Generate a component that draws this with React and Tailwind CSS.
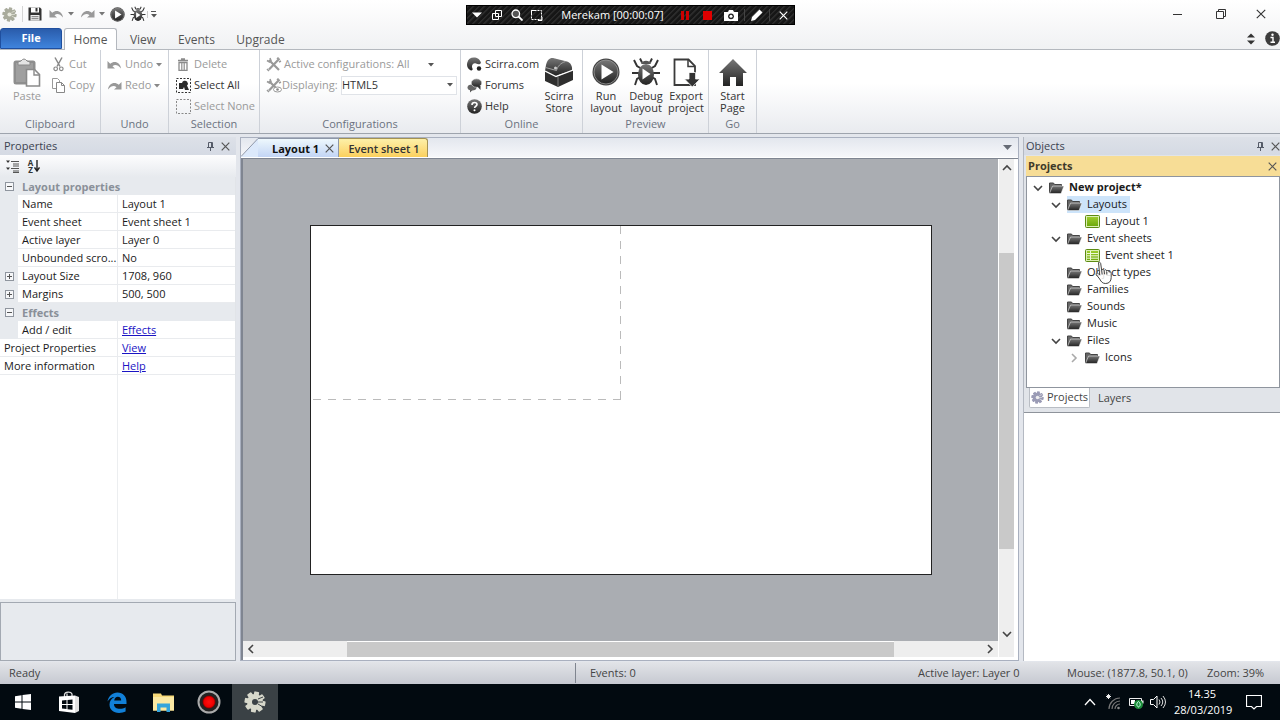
import { useState } from 'react';

const sheetRows = [
    { name: 'Name', value: 'Layout 1' },
    { name: 'Event sheet', value: 'Event sheet 1' },
    { name: 'Active layer', value: 'Layer 0' },
    { name: 'Unbounded scro...', value: 'No' },
    { name: 'Layout Size', value: '1708, 960', box: '+' },
    { name: 'Margins', value: '500, 500', box: '+' },
];

const linkRows = [
    { name: 'Project Properties', value: 'View' },
    { name: 'More information', value: 'Help' },
];

const tree = [
    { label: 'New project*', depth: 0, open: true, bold: true },
    { label: 'Layouts', depth: 1, open: true, selected: true },
    { label: 'Layout 1', depth: 2, icon: 'layout' },
    { label: 'Event sheets', depth: 1, open: true },
    { label: 'Event sheet 1', depth: 2, icon: 'sheet' },
    { label: 'Object types', depth: 1 },
    { label: 'Families', depth: 1 },
    { label: 'Sounds', depth: 1 },
    { label: 'Music', depth: 1 },
    { label: 'Files', depth: 1, open: true },
    { label: 'Icons', depth: 2, open: false },
];

const indents = ['pl-[6px]', 'pl-[24px]', 'pl-[42px]'];

/* ---------- icons ---------- */

function Gradients() {
    return (
        <svg width="0" height="0" className="absolute" aria-hidden="true">
            <defs>
                <linearGradient id="dark" x1="0" y1="0" x2="0" y2="1">
                    <stop offset="0" stopColor="#777" />
                    <stop offset="1" stopColor="#222" />
                </linearGradient>
                <linearGradient id="green" x1="0" y1="0" x2="0" y2="1">
                    <stop offset="0" stopColor="#9ccb2c" />
                    <stop offset="1" stopColor="#6ea90c" />
                </linearGradient>
                <radialGradient id="rec">
                    <stop offset="0" stopColor="#ff1010" />
                    <stop offset="0.75" stopColor="#e00" />
                    <stop offset="1" stopColor="#700" />
                </radialGradient>
            </defs>
        </svg>
    );
}

function Caret({ color = '#555' }) {
    return (
        <svg width="6" height="4" viewBox="0 0 6 4" className="shrink-0">
            <path d="M0 0h6L3 3.5z" fill={color} />
        </svg>
    );
}

function Cross({ size = 9, color = '#555', width = 1.2 }) {
    return (
        <svg width={size} height={size} viewBox="0 0 9 9" className="shrink-0">
            <path d="M0.7 0.7l7.6 7.6M8.3 0.7l-7.6 7.6" stroke={color} strokeWidth={width} />
        </svg>
    );
}

function Pin() {
    return (
        <svg width="7" height="9" viewBox="0 0 7 9">
            <path d="M1.5 5V0.5h4V5M4.5 0.5V5M0 5.5h7M3.5 5.5V9" fill="none" stroke="#555b68" />
        </svg>
    );
}

function Chevron({ dir = 'down', color = '#444', width = 1.6 }) {
    const paths = {
        down: 'M1 3l4 4 4-4',
        up: 'M1 7l4-4 4 4',
        left: 'M7 1L3 5l4 4',
        right: 'M3 1l4 4-4 4',
    };
    return (
        <svg width="10" height="10" viewBox="0 0 10 10" className="shrink-0">
            <path d={paths[dir]} fill="none" stroke={color} strokeWidth={width} />
        </svg>
    );
}

function Gear({ size, color, hole }) {
    return (
        <svg width={size} height={size} viewBox="0 0 22 22" className="shrink-0">
            {[0, 45, 90, 135].map((a) => (
                <rect key={a} x="8.5" y="0.5" width="5" height="21" rx="1" fill={color} transform={`rotate(${a + 10} 11 11)`} />
            ))}
            <circle cx="11" cy="11" r="8" fill={color} />
            <circle cx="11" cy="11" r="3" fill={hole} />
            <path d="M14 8l5-2M14 13l5 3M13 11h6" stroke={hole} strokeWidth="1" />
        </svg>
    );
}

function SaveIcon() {
    return (
        <svg width="14" height="14" viewBox="0 0 14 14">
            <path d="M0.5 0.5h11.5l1.5 1.5v11.5h-13z" fill="#333" />
            <path d="M3 0.5h8v5H3z" fill="#fff" />
            <path d="M7.5 1h2v3.5h-2z" fill="#333" />
            <path d="M2.5 8h9v5.5h-9z" fill="#eee" />
            <path d="M3.5 9.7h7M3.5 11.7h7" stroke="#777" />
        </svg>
    );
}

function UndoIcon({ flip, color = '#999' }) {
    return (
        <svg width="15" height="12" viewBox="0 0 15 12" className={flip ? '-scale-x-100 shrink-0' : 'shrink-0'}>
            <path d="M0.5 2v7.5H8L5.5 7.2c2.6-2 5.5-1.2 8.500 2.300C13.300 4 8 1 3.200 4.700z" fill={color} />
        </svg>
    );
}

function PlayIcon({ size }) {
    return (
        <svg width={size} height={size} viewBox="0 0 28 28">
            <circle cx="14" cy="14" r="13.500" fill="#444" />
            <circle cx="14" cy="14" r="12" fill="url(#dark)" stroke="#999" strokeWidth="0.800" />
            <path d="M9.500 6.500v15L21.500 14z" fill="#fff" />
        </svg>
    );
}

function BugIcon({ size }) {
    return (
        <svg width={size} height={size} viewBox="0 0 30 30">
            <path d="M9 1.500l2 4M21 1.500l-2 4M3 3l3 6 5 3M27 3l-3 6-5 3M1 16h8M29 16h-8M4 28l2-6 5-3M26 28l-2-6-5-3" fill="none" stroke="#333" strokeWidth="1.900" />
            <path d="M10 7a5.500 5.500 0 0 1 10 0z" fill="#555" />
            <ellipse cx="15" cy="17.500" rx="8" ry="10.500" fill="url(#dark)" />
            <path d="M11.500 11.500v11l8-5.500z" fill="#fff" />
        </svg>
    );
}

function PasteIcon() {
    return (
        <svg width="28" height="29" viewBox="0 0 28 29">
            <rect x="0.500" y="2.500" width="22" height="24" rx="2.500" fill="#8e8e8e" />
            <rect x="3" y="5" width="17" height="19" fill="#9f9f9f" />
            <path d="M5 7V4l3-1q3-4 6 0l3 1v3z" fill="#e4e4e4" stroke="#8a8a8a" />
            <path d="M13.500 11.500h8l5 5v11.500h-13z" fill="#fff" stroke="#8a8a8a" strokeWidth="1.600" />
            <path d="M21 12v5h5" fill="none" stroke="#8a8a8a" strokeWidth="1.400" />
        </svg>
    );
}

function CutIcon() {
    return (
        <svg width="11" height="15" viewBox="0 0 11 15">
            <path d="M2 0.500l5 9M9 0.500l-5 9" stroke="#888" strokeWidth="1.500" />
            <circle cx="2.700" cy="11.800" r="1.800" fill="none" stroke="#888" strokeWidth="1.200" />
            <circle cx="8.300" cy="11.800" r="1.800" fill="none" stroke="#888" strokeWidth="1.200" />
        </svg>
    );
}

function CopyIcon() {
    return (
        <svg width="13" height="15" viewBox="0 0 13 15">
            <path d="M0.500 0.500h5l2 2v8h-7z" fill="#fff" stroke="#999" />
            <path d="M4.500 4.500h5l3 3v7h-8z" fill="#fff" stroke="#888" />
            <path d="M9.500 4.500v3h3" fill="none" stroke="#888" />
        </svg>
    );
}

function TrashIcon() {
    return (
        <svg width="12" height="13" viewBox="0 0 12 13">
            <path d="M1 2.500h10M4 1h4M2 4.500h8v8H2z" fill="none" stroke="#8a8a8a" strokeWidth="1.300" />
            <path d="M4.500 5v7M6 5v7M7.500 5v7" stroke="#999" strokeWidth="0.900" />
        </svg>
    );
}

function SelectIcon({ all }) {
    return (
        <svg width="15" height="15" viewBox="0 0 15 15">
            <rect x="0.500" y="0.500" width="14" height="14" fill="none" stroke={all ? '#333' : '#888'} strokeDasharray="2 1.500" />
            {all && <path d="M3 5h3a3 3 0 0 1 5-1.500 3 3 0 0 1 0 4l2 4.500H9l-1-3-1 2H3z" fill="#2b2b2b" />}
        </svg>
    );
}

function ToolsIcon({ eye }) {
    return (
        <svg width="16" height="15" viewBox="0 0 16 15" className="shrink-0">
            <path d="M3 3l10 10M13.500 1.500L3 12.500" stroke="#999" strokeWidth="2.200" />
            <path d="M1 3.500l2.500 1.500 1.500-1.500L4 1M1 12l2 2M11 2l1.500-1.500M15 4l-2 1" fill="none" stroke="#999" strokeWidth="1.500" />
            {eye && <ellipse cx="11.500" cy="11.500" rx="4" ry="2.500" fill="#fff" stroke="#999" />}
            {eye && <circle cx="11.500" cy="11.500" r="1.300" fill="#888" />}
        </svg>
    );
}

function ScirraIcon() {
    return (
        <svg width="15" height="15" viewBox="0 0 15 15">
            <path d="M14 6C13 2 10 0.500 7 0.500A6.800 6.800 0 0 0 3.500 13.200C5 13.800 6 13 5.500 11.500 4 8.500 6 5.500 9 6.500c2 0.800 3.500 1.500 5-0.500z" fill="url(#dark)" />
            <circle cx="8.500" cy="8.500" r="1" fill="#fff" />
            <circle cx="12" cy="11.500" r="2.200" fill="#222" />
        </svg>
    );
}

function ForumsIcon() {
    return (
        <svg width="15" height="15" viewBox="0 0 15 15">
            <path d="M4.500 7a4.500 3.500 0 0 0 1 5L3 14.500 3 12A3.500 3.500 0 0 1 4.500 7z" fill="#555" />
            <ellipse cx="5" cy="9.500" rx="4.500" ry="3" fill="#666" />
            <ellipse cx="9.500" cy="5" rx="5.300" ry="4.200" fill="url(#dark)" stroke="#eee" strokeWidth="0.600" />
            <path d="M10 8h3.500v4z" fill="#333" />
        </svg>
    );
}

function HelpIcon() {
    return (
        <svg width="15" height="15" viewBox="0 0 15 15">
            <circle cx="7.500" cy="7.500" r="7.300" fill="url(#dark)" />
            <path d="M5 6c0-3.500 5-3 5-0.500 0 1.800-2.400 1.700-2.400 3.500" fill="none" stroke="#fff" strokeWidth="1.600" />
            <circle cx="7.500" cy="11.300" r="1" fill="#fff" />
        </svg>
    );
}

function ChestIcon() {
    return (
        <svg width="28" height="30" viewBox="0 0 28 30">
            <path d="M1 8C2 3 5 0.500 8 1l14 3.500c3.500 1 5.500 4.500 5 9L10 19 0 14z" fill="url(#dark)" />
            <path d="M0 14l13 5 15-6v10L13 30 0 24z" fill="#2e2e2e" />
            <path d="M0 14l11 5.500L28 13" fill="none" stroke="#fff" strokeWidth="1.300" />
            <path d="M0.500 10.500l11 3c1-4 4-7.500 9-9" fill="none" stroke="#aaa" strokeWidth="0.900" />
            <path d="M13 20v9.500" stroke="#888" strokeWidth="0.900" />
            <circle cx="10.500" cy="11" r="1.500" fill="#ccc" />
        </svg>
    );
}

function ExportIcon() {
    return (
        <svg width="27" height="29" viewBox="0 0 27 29">
            <path d="M1.500 1.500h14l6.500 6.500v19H1.500z" fill="#fff" stroke="#3a3a3a" strokeWidth="1.800" />
            <path d="M15 1.500v7h7" fill="none" stroke="#3a3a3a" strokeWidth="1.500" />
            <path d="M16 14.500h6.500v6.500H27L19.300 29 11.500 21H16z" fill="#333" stroke="#fff" strokeWidth="0.800" />
        </svg>
    );
}

function HomeIcon() {
    return (
        <svg width="28" height="27" viewBox="0 0 28 27">
            <path d="M14 0l14 14h-4v13h-7v-9h-6v9H4V14H0z" fill="url(#dark)" />
        </svg>
    );
}

function InfoIcon() {
    return (
        <svg width="15" height="15" viewBox="0 0 15 15">
            <circle cx="7.500" cy="7.500" r="7.300" fill="#3c3c3c" />
            <path d="M5.500 6.500h2.500v4.500M5.500 11.300h4.500" fill="none" stroke="#fff" strokeWidth="1.400" />
            <circle cx="7.500" cy="3.700" r="1.200" fill="#fff" />
        </svg>
    );
}

function FolderIcon() {
    return (
        <svg width="15" height="12" viewBox="0 0 15 12" className="shrink-0">
            <path d="M0.500 11V1h4l1 1.500h7V4" fill="#666" stroke="#444" />
            <path d="M0.500 11.500L3.500 4H15l-3 7.500z" fill="url(#dark)" stroke="#fff" strokeWidth="0.500" />
        </svg>
    );
}

function GreenIcon({ sheet }) {
    return (
        <svg width="15" height="13" viewBox="0 0 15 13" className="shrink-0">
            <rect x="0.500" y="0.500" width="14" height="12" rx="1" fill="#dcefb4" stroke="#5c8b12" />
            <rect x="2" y="2" width="11" height="9" fill="url(#green)" />
            {sheet && <path d="M2 4.500h11M2 6.800h11M2 9.200h11M5.500 2v9" stroke="#eef8d8" />}
        </svg>
    );
}

function HandCursor() {
    return (
        <svg width="18" height="24" viewBox="0 0 18 24" className="absolute left-[68px] top-[84px] pointer-events-none">
            <path d="M3.500 1.500c1-0.800 2 0 2.200 1l1 7c0-1.500 2.200-1.500 2.500 0 0.500-1.200 2.300-1 2.500 0.500 0.800-1 2.300-0.500 2.500 1 1-0.500 2 0 2 1.500v4c0 3.500-2 6-5.500 6-3 0-4.500-1.500-6-4.500l-3.500-4.500c-0.500-1.200 1-2 2-1l1.500 1.500z" fill="#fff" fillOpacity="0.850" stroke="#444" />
            <path d="M6.700 9.500l0.500 4M9.200 9.800l0.300 3.500M11.700 10.500l0.200 3" stroke="#444" />
        </svg>
    );
}

/* ---------- ribbon ---------- */

function RibbonGroup({ label, className, children }) {
    return (
        <section className={`flex flex-col border-r border-[#cdd1d8] pt-[4px] ${className}`}>
            <div className="flex h-[62px]">{children}</div>
            <h2 className="text-center leading-[15px] text-[#6b7280]">{label}</h2>
        </section>
    );
}

function SmallButton({ icon, label, caret, enabled }) {
    return (
        <button className={`flex h-[21px] items-center gap-[3px] whitespace-nowrap ${enabled ? 'text-[#333]' : 'text-[#9a9a9a]'}`}>
            <span className="flex w-4 shrink-0 justify-center">{icon}</span>
            {label}
            {caret && <Caret color="#888" />}
        </button>
    );
}

function BigButton({ icon, label, className, muted }) {
    return (
        <button className={`flex shrink-0 flex-col items-center leading-[12px] ${muted ? 'text-[#9a9a9a]' : 'text-[#333]'} ${className}`}>
            <span className="flex h-9 items-center">{icon}</span>
            <span className="w-min">{label}</span>
        </button>
    );
}

function Ribbon() {
    return (
        <div className="flex h-[84px] shrink-0 border-b border-[#9ea4ad] bg-linear-to-b from-white from-40% to-[#e9ebef]">
            <RibbonGroup label="Clipboard" className="w-[101px]">
                <BigButton icon={<PasteIcon />} label="Paste" className="w-[50px] pl-1" muted />
                <div>
                    <SmallButton icon={<CutIcon />} label="Cut" />
                    <SmallButton icon={<CopyIcon />} label="Copy" />
                </div>
            </RibbonGroup>
            <RibbonGroup label="Undo" className="w-[68px]">
                <div className="pl-[5px]">
                    <SmallButton icon={<UndoIcon />} label="Undo" caret />
                    <SmallButton icon={<UndoIcon flip />} label="Redo" caret />
                </div>
            </RibbonGroup>
            <RibbonGroup label="Selection" className="w-[91px]">
                <div className="pl-[6px]">
                    <SmallButton icon={<TrashIcon />} label="Delete" />
                    <SmallButton icon={<SelectIcon all />} label="Select All" enabled />
                    <SmallButton icon={<SelectIcon />} label="Select None" />
                </div>
            </RibbonGroup>
            <RibbonGroup label="Configurations" className="w-[201px]">
                <div className="w-full pl-[6px] pr-[3px] text-[#9a9a9a]">
                    <button className="flex h-[21px] w-full items-center gap-[2px] pr-[23px]">
                        <ToolsIcon />
                        Active configurations: All
                        <span className="ml-auto"><Caret /></span>
                    </button>
                    <div className="flex h-[21px] items-center">
                        <ToolsIcon eye />
                        <label htmlFor="displaying" className="w-[59px] shrink-0">Displaying:</label>
                        <div className="relative flex-1">
                            <select id="displaying" className="block h-[19px] w-full appearance-none border border-[#e0e3e8] bg-white text-[#333]">
                                <option>HTML5</option>
                            </select>
                            <span className="pointer-events-none absolute right-1 top-[7px]"><Caret /></span>
                        </div>
                    </div>
                </div>
            </RibbonGroup>
            <RibbonGroup label="Online" className="w-[122px]">
                <div className="w-[75px] pl-[5px]">
                    <SmallButton icon={<ScirraIcon />} label="Scirra.com" enabled />
                    <SmallButton icon={<ForumsIcon />} label="Forums" enabled />
                    <SmallButton icon={<HelpIcon />} label="Help" enabled />
                </div>
                <BigButton icon={<ChestIcon />} label="Scirra Store" className="w-[46px]" />
            </RibbonGroup>
            <RibbonGroup label="Preview" className="w-[126px]">
                <div className="flex pl-[3px]">
                    <BigButton icon={<PlayIcon size={28} />} label="Run layout" className="w-10" />
                    <BigButton icon={<BugIcon size={30} />} label="Debug layout" className="w-10" />
                    <BigButton icon={<ExportIcon />} label="Export project" className="w-10" />
                </div>
            </RibbonGroup>
            <RibbonGroup label="Go" className="w-[48px]">
                <BigButton icon={<HomeIcon />} label="Start Page" className="w-full" />
            </RibbonGroup>
        </div>
    );
}

/* ---------- title bar and ribbon tabs ---------- */

function Recorder() {
    return (
        <div className="absolute left-[466px] top-[5px] flex h-5 w-[329px] items-center border border-black bg-[repeating-linear-gradient(135deg,#2b2b2b_0_1px,#161616_2px_4px)] pl-[5px] pr-[5px] text-white">
            <button aria-label="Menu" className="w-5"><svg width="10" height="6" viewBox="0 0 10 6"><path d="M0 0.500h10L5 5.500z" fill="#fff" /></svg></button>
            <button aria-label="Window" className="w-[19px]">
                <svg width="10" height="10" viewBox="0 0 10 10"><path d="M3.500 0.500h6v6h-6zM0.500 3.500h6v6h-6z" fill="none" stroke="#fff" /></svg>
            </button>
            <button aria-label="Zoom" className="w-5">
                <svg width="12" height="12" viewBox="0 0 12 12"><circle cx="4.800" cy="4.800" r="3.800" fill="#555" stroke="#fff" strokeWidth="1.300" /><path d="M7.500 7.500l4 4" stroke="#fff" strokeWidth="1.800" /></svg>
            </button>
            <button aria-label="Region" className="w-5">
                <svg width="12" height="11" viewBox="0 0 12 11"><rect x="0.500" y="0.500" width="10" height="9" fill="none" stroke="#fff" strokeDasharray="2 1" /><path d="M0.500 4V0.500H4M11 7v3.500H7" fill="none" stroke="#fff" /></svg>
            </button>
            <span className="flex-1 text-center">Merekam [00:00:07]</span>
            <button aria-label="Pause" className="w-[22px]"><svg width="8" height="9" viewBox="0 0 8 9" className="mx-auto"><path d="M0 0h3v9H0zM5 0h3v9H5z" fill="#c00" /></svg></button>
            <button aria-label="Stop" className="w-[22px]"><svg width="9" height="9" className="mx-auto"><rect width="9" height="9" fill="#e00000" /></svg></button>
            <button aria-label="Snapshot" className="w-[26px]">
                <svg width="14" height="11" viewBox="0 0 14 11" className="mx-auto"><path d="M0 2h4l1-2h4l1 2h4v9H0z" fill="#fff" /><circle cx="7" cy="6.300" r="2.900" fill="#222" /><circle cx="7" cy="6.300" r="1.500" fill="#fff" /></svg>
            </button>
            <button aria-label="Draw" className="w-[26px] border-x border-[#444]">
                <svg width="12" height="12" viewBox="0 0 12 12" className="mx-auto"><path d="M0 12l1-4L8.500 0.500l3 3L4 11z" fill="#fff" /></svg>
            </button>
            <button aria-label="Close recorder" className="ml-[7px] flex w-3 justify-center"><Cross color="#fff" /></button>
        </div>
    );
}

function TitleBar() {
    return (
        <header className="flex h-7 shrink-0 items-center">
            <div className="flex flex-1 items-center pl-[2px]">
                <Gear size={15} color="#a9ab9c" hole="#e9eadf" />
                <span className="mx-[5px] h-4 w-px bg-[#d5d5d5]" />
                <button aria-label="Save"><SaveIcon /></button>
                <button aria-label="Undo" className="ml-[7px] flex items-center gap-1"><UndoIcon /><Caret color="#777" /></button>
                <button aria-label="Redo" className="ml-[6px] flex items-center gap-1"><UndoIcon flip /><Caret color="#777" /></button>
                <button aria-label="Run layout" className="ml-[5px]"><PlayIcon size={15} /></button>
                <button aria-label="Debug layout" className="ml-[5px]"><BugIcon size={16} /></button>
                <button aria-label="Customize" className="ml-px flex flex-col gap-0.5 border-l border-[#ccc] pl-[3px]">
                    <span className="h-px w-[5px] bg-[#555]" />
                    <Caret />
                </button>
            </div>
            <div className="flex items-center">
                <button aria-label="Minimize" className="flex w-[43px] justify-center"><span className="h-px w-[9px] bg-[#333]" /></button>
                <button aria-label="Restore" className="flex w-[43px] justify-center">
                    <svg width="10" height="10" viewBox="0 0 10 10"><path d="M0.500 2.500h7v7h-7zM2.500 2.500v-2h7v7h-2" fill="none" stroke="#333" /></svg>
                </button>
                <button aria-label="Close" className="flex w-[38px] justify-center"><Cross size={10} color="#333" width={1} /></button>
            </div>
        </header>
    );
}

function RibbonTabs() {
    return (
        <nav className="flex h-[22px] shrink-0 items-stretch border-b border-[#b4b8be] text-[12px] text-[#555]">
            <button className="w-[62px] rounded-t-[3px] border border-[#1f4f9f] bg-linear-to-b from-[#2a5cab] to-[#3f84dd] text-[11px] font-bold text-white">File</button>
            <button className="z-10 -mb-px ml-[2px] w-[53px] rounded-t-[3px] border border-b-0 border-[#b4b8be] bg-white">Home</button>
            <button className="w-[52px] pt-[2px]">View</button>
            <button className="w-[55px] pt-[2px]">Events</button>
            <button className="w-[73px] pt-[2px]">Upgrade</button>
            <button aria-label="Collapse ribbon" className="ml-auto mr-[10px]">
                <svg width="8" height="12" viewBox="0 0 8 12"><path d="M0 4.500h8L4 0.500zM0 7.500h8l-4 4z" fill="#333" /></svg>
            </button>
            <button aria-label="About"><InfoIcon /></button>
        </nav>
    );
}

/* ---------- panels ---------- */

function PanelHeader({ title, className }) {
    return (
        <div className={`flex h-[18px] shrink-0 items-center bg-linear-to-b from-[#dde1e8] to-[#d5dae4] text-[#3c4250] ${className}`}>
            <h2 className="flex-1">{title}</h2>
            <button aria-label={`Pin ${title}`} className="mr-[7px]"><Pin /></button>
            <button aria-label={`Close ${title}`}><Cross /></button>
        </div>
    );
}

function BoxMark({ sign }) {
    return (
        <button aria-label={sign === '+' ? 'Expand' : 'Collapse'} className="ml-[5px] block">
            <svg width="9" height="9" viewBox="0 0 9 9">
                <rect x="0.500" y="0.500" width="8" height="8" fill="#f6f7f9" stroke="#8f959e" />
                <path d={sign === '+' ? 'M2 4.500h5M4.500 2v5' : 'M2 4.500h5'} stroke="#555" />
            </svg>
        </button>
    );
}

function SectionRow({ label }) {
    return (
        <tr className="h-[18px] bg-[#e7eaee] text-left text-[#8a9099]">
            <td><BoxMark sign="-" /></td>
            <th colSpan={2} className="pl-1 font-bold">{label}</th>
        </tr>
    );
}

function PropertiesPanel() {
    return (
        <aside className="flex w-[236px] shrink-0 flex-col bg-[#e7eaee]">
            <PanelHeader title="Properties" className="pl-1 pr-[6px]" />
            <div className="flex h-[22px] shrink-0 items-center gap-2 bg-linear-to-b from-[#fdfdfe] to-[#e7eaee] pl-[6px]">
                <button aria-label="Categorized">
                    <svg width="13" height="13" viewBox="0 0 13 13"><path d="M0 0.500h4L2 3zM0 7.500h4L2 10z" fill="#333" /><path d="M5 1.500h8M7 4h6M7 6h6M5 8.500h8M7 11h6M7 12.500h6" stroke="#555" /></svg>
                </button>
                <button aria-label="Sort A to Z" className="flex items-center">
                    <span className="w-[7px] break-all text-[8px] font-bold leading-[7px] text-[#333]">AZ</span>
                    <svg width="6" height="12" viewBox="0 0 6 12"><path d="M3 0v10M0.500 7.500L3 11l2.500-3.500" fill="none" stroke="#222" strokeWidth="1.400" /></svg>
                </button>
            </div>
            <div className="flex min-h-0 flex-1 flex-col border-r border-[#e1e4e8] bg-white">
                <table className="w-full table-fixed border-separate border-spacing-0 leading-[17px] text-[#1a1a1a]">
                    <colgroup>
                        <col className="w-[18px]" />
                        <col className="w-[100px]" />
                        <col />
                    </colgroup>
                    <tbody>
                        <SectionRow label="Layout properties" />
                        {sheetRows.map((row) => (
                            <tr key={row.name} className="h-[18px]">
                                <td className="bg-[#e7eaee]">{row.box && <BoxMark sign={row.box} />}</td>
                                <td className="whitespace-nowrap border-b border-r border-[#e9ebee] pl-1">{row.name}</td>
                                <td className="border-b border-[#e9ebee] pl-1">{row.value}</td>
                            </tr>
                        ))}
                        <SectionRow label="Effects" />
                        <tr className="h-[18px]">
                            <td className="bg-[#e7eaee]" />
                            <td className="border-b border-r border-[#e9ebee] pl-1">Add / edit</td>
                            <td className="border-b border-[#e9ebee] pl-1"><a href="#effects" className="text-[#1a14c4] underline">Effects</a></td>
                        </tr>
                        {linkRows.map((row) => (
                            <tr key={row.name} className="h-[18px]">
                                <td colSpan={2} className="border-b border-r border-[#e9ebee] pl-1">{row.name}</td>
                                <td className="border-b border-[#e9ebee] pl-1"><a href={`#${row.value}`} className="text-[#1a14c4] underline">{row.value}</a></td>
                            </tr>
                        ))}
                    </tbody>
                </table>
                <div className="w-[118px] flex-1 border-r border-[#eceef0]" />
            </div>
            <div className="mt-[3px] h-[59px] shrink-0 border border-[#a3a9b2]" />
        </aside>
    );
}

function LayoutEditor() {
    return (
        <main className="flex min-w-0 flex-1 flex-col border border-[#a9b0bf] bg-white">
            <div className="flex h-[19px] shrink-0 items-end bg-linear-to-b from-[#e3e7ee] to-[#f6f7fa]">
                <div className="flex h-[19px] items-stretch">
                    <svg width="17" height="19" viewBox="0 0 17 19">
                        <path d="M0 19L17 0.500V19z" fill="#dce9fb" />
                        <path d="M0 18.500L17 0.500" stroke="#8e97a8" />
                    </svg>
                    <div className="flex w-[81px] items-center justify-between border-r border-t border-[#8e97a8] bg-linear-to-b from-[#eef8fd] to-[#c3d5f5] pl-[14px] pr-[4px] font-bold leading-[17px] text-[#111]">
                        <button>Layout 1</button>
                        <button aria-label="Close Layout 1"><Cross /></button>
                    </div>
                    <button className="w-[89px] rounded-tr-[3px] border-r border-t border-[#a39254] bg-linear-to-b from-[#fdf0a8] to-[#fbd05c] pl-[2px] leading-[17px] font-semibold text-[#333]">Event sheet 1</button>
                </div>
                <button aria-label="Open tabs" className="mb-[7px] ml-auto mr-[6px]">
                    <svg width="9" height="5" viewBox="0 0 9 5"><path d="M0 0h9L4.500 5z" fill="#666b75" /></svg>
                </button>
            </div>
            <div className="mt-px flex min-h-0 flex-1 border-l-2 border-t border-[#7f8591] pb-[3px] pr-[4px]">
                <div className="flex min-w-0 flex-1 flex-col">
                    <div className="flex min-h-0 flex-1 items-center justify-center bg-[#aaadb2]">
                        <div className="aspect-[622/350] w-[622px] max-w-[90%] border border-[#222] bg-white">
                            {/* viewport outline */}
                            <div className="flex h-1/2 w-1/2 flex-col">
                                <div className="ml-auto w-px flex-1 bg-[repeating-linear-gradient(to_bottom,#bbb_0_8px,#fff_8px_15px)]" />
                                <div className="h-px bg-[repeating-linear-gradient(to_left,#bbb_0_8px,#fff_8px_15px)]" />
                            </div>
                        </div>
                    </div>
                    <div className="flex h-4 shrink-0 items-center bg-[#eeeeee]">
                        <button aria-label="Scroll left" className="ml-[3px]"><Chevron dir="left" /></button>
                        <div className="flex h-full flex-1 px-[12%]">
                            <div className="h-full flex-1 border-t border-white bg-[#c9c9c9]" />
                        </div>
                        <button aria-label="Scroll right" className="mr-[3px]"><Chevron dir="right" /></button>
                    </div>
                </div>
                <div className="flex w-4 shrink-0 flex-col items-center border-l border-white bg-[#eeeeee] pb-[18px] pt-1">
                    <button aria-label="Scroll up" className="h-[10px]"><Chevron dir="up" /></button>
                    <div className="flex w-full flex-1 flex-col pb-20 pt-20">
                        <div className="w-full flex-1 bg-[#c9c9c9]" />
                    </div>
                    <button aria-label="Scroll down" className="h-[10px]"><Chevron dir="down" /></button>
                </div>
            </div>
        </main>
    );
}

function TreeRow({ item, selected, onSelect }) {
    return (
        <li className={`flex h-[17px] items-center ${indents[item.depth]}`}>
            <span className="flex w-[16px] shrink-0">
                {item.open !== undefined && <Chevron dir={item.open ? 'down' : 'right'} color={item.open ? '#444' : '#aaa'} />}
            </span>
            <button onClick={onSelect} className={`flex h-[17px] items-center gap-[5px] pr-[3px] ${selected ? 'bg-[#cde4fa]' : ''} ${item.bold ? 'font-bold' : ''}`}>
                {item.icon ? <GreenIcon sheet={item.icon === 'sheet'} /> : <FolderIcon />}
                {item.label}
            </button>
        </li>
    );
}

function ObjectsPanel() {
    const [selected, setSelected] = useState('Layouts');

    return (
        <aside className="flex w-[257px] shrink-0 flex-col border-l border-[#b4b9c2] bg-white">
            <div className="flex h-[276px] shrink-0 flex-col border-b border-[#8e939b] bg-[#e1e4e9]">
                <PanelHeader title="Objects" className="pl-[2px]" />
                <div className="mt-px ml-[2px] flex h-5 shrink-0 items-center bg-[#f7dd96] pl-[2px] pr-[3px] font-bold text-[#3f3a2a]">
                    <h2 className="flex-1">Projects</h2>
                    <button aria-label="Close Projects"><Cross /></button>
                </div>
                <div className="relative ml-[2px] flex-1 border border-[#8f959e] bg-white pt-[2px] text-[#1a1a1a]">
                    <ul>
                        {tree.map((item) => (
                            <TreeRow key={item.label} item={item} selected={selected === item.label} onSelect={() => setSelected(item.label)} />
                        ))}
                    </ul>
                    <HandCursor />
                </div>
                <div className="mb-[4px] flex h-5 shrink-0 pl-[5px] text-[#444]">
                    <button className="flex w-[61px] items-center gap-[3px] rounded-b-[2px] border border-t-0 border-[#b9bdc4] bg-white pl-px">
                        <Gear size={13} color="#9a9bb5" hole="#eee" />
                        Projects
                    </button>
                    <button className="px-2">Layers</button>
                </div>
            </div>
        </aside>
    );
}

/* ---------- bottom bars ---------- */

function StatusBar() {
    return (
        <footer className="flex h-[22px] shrink-0 items-center bg-linear-to-b from-[#e2e4e8] to-[#c6c9d1] text-[#444]">
            <span className="w-[45%] border-r border-[#7f858f] pl-[9px] leading-[20px]">Ready</span>
            <span className="flex-1 pl-[14px]">Events: 0</span>
            <span className="w-[149px]">Active layer: Layer 0</span>
            <span className="w-[140px]">Mouse: (1877.8, 50.1, 0)</span>
            <span className="w-[73px]">Zoom: 39%</span>
        </footer>
    );
}

function Taskbar() {
    const task = 'flex w-[46px] items-center justify-center';
    return (
        <div className="flex h-9 shrink-0 items-stretch bg-[#020a10] text-white">
            <button aria-label="Start" className="flex w-[46px] items-center justify-center">
                <svg width="16" height="16" viewBox="0 0 16 16"><path d="M0 2.300l6.500-1V7.500H0zM7.500 1.100L16 0v7.500H7.500zM0 8.500h6.500v6.200L0 13.700zM7.500 8.500H16V16l-8.500-1.100z" fill="#fff" /></svg>
            </button>
            <button aria-label="Store" className={task}>
                <svg width="20" height="23" viewBox="0 0 20 23">
                    <path d="M5.500 6V3.500C6 0.500 12 0.500 13 3v3M8 5V2.500" fill="none" stroke="#ddd" strokeWidth="1.300" />
                    <path d="M0 5.500l16-1v17.500L0 20z" fill="#fff" />
                    <path d="M16 4.500l4 1.500v14l-4 2z" fill="#e2e2e2" />
                    <path d="M3 9.500l4.500-0.500v4H3zM8.500 9L13.500 8.500V13h-5zM3 14h4.500v4L3 17.500zM8.500 14h5v4.700l-5-0.500z" fill="#020a10" />
                </svg>
            </button>
            <button aria-label="Edge" className={`${task} ml-[2px]`}>
                <svg width="20" height="21" viewBox="0 0 20 21">
                    <path d="M0.500 9.500C1.500 4 5.500 0.500 10.500 0.500c5.500 0 9 4 9 9.200v2.300H7c0 3.300 2.600 4.800 5.800 4.800 2.200 0 4.200-0.600 5.800-1.600v4.300c-1.800 0.900-4 1.400-6.500 1.400C6.200 20.900 2.500 17.500 2.500 12.500c0-3.500 2-6 5-7.500C4.500 5 2 7 0.500 9.500zM7.200 8.500h7c0-2.300-1.300-3.700-3.300-3.700S7.500 6.200 7.200 8.500z" fill="#1180d8" />
                </svg>
            </button>
            <button aria-label="File Explorer" className={task}>
                <svg width="21" height="19" viewBox="0 0 21 19">
                    <path d="M0 0.500h8l1 2h12v15H0z" fill="#f7d978" />
                    <path d="M0 4h21v13.500H0z" fill="#fbe9a3" />
                    <path d="M4 10.500h13V19h-3.500v-4.500h-6V19H4z" fill="#35a5dc" />
                </svg>
            </button>
            <button aria-label="Recorder" className={task}>
                <svg width="24" height="24" viewBox="0 0 24 24">
                    <circle cx="12" cy="12" r="10.500" fill="#222" stroke="#aaa" strokeWidth="2" />
                    <circle cx="12" cy="12" r="6.500" fill="url(#rec)" />
                </svg>
            </button>
            <button aria-label="Construct" className={`${task} bg-[#3a4145]`}>
                <Gear size={22} color="#d7d8cb" hole="#3a4145" />
            </button>
            <div className="ml-auto flex items-center">
                <button aria-label="Hidden icons" className="mr-[10px]">
                    <svg width="12" height="8" viewBox="0 0 12 8"><path d="M1 7l5-5.500L11 7" fill="none" stroke="#fff" strokeWidth="1.300" /></svg>
                </button>
                <button aria-label="Network" className="mr-[9px]">
                    <svg width="14" height="16" viewBox="0 0 14 16">
                        <path d="M2.500 0v5M0 2.500h5M0.800 0.800l3.400 3.400M4.200 0.800L0.800 4.200" stroke="#eee" />
                        <path d="M3 15A11 11 0 0 1 14 4M6 15a8 8 0 0 1 8-8M9 15a5 5 0 0 1 5-5" fill="none" stroke="#777" strokeWidth="1.200" />
                        <circle cx="12.500" cy="14" r="1.300" fill="#888" />
                    </svg>
                </button>
                <button aria-label="Battery" className="mr-[6px]">
                    <svg width="15" height="13" viewBox="0 0 15 13">
                        <path d="M0.500 2.500h12v7H0.500z" fill="none" stroke="#eee" />
                        <path d="M2 4h4v4H2zM13 4.500h1.500v3H13z" fill="#fff" />
                        <circle cx="9.500" cy="8.500" r="4.500" fill="#1d8d3a" />
                        <path d="M9.500 5.500c2.500 2 2 4.500 0 5.500-2-1-2.500-3.500 0-5.500z" fill="none" stroke="#cfe" />
                    </svg>
                </button>
                <button aria-label="Volume" className="mr-[8px]">
                    <svg width="16" height="14" viewBox="0 0 16 14">
                        <path d="M0.500 4.500h3l3.500-3.500v12L3.500 9.500h-3z" fill="none" stroke="#fff" />
                        <path d="M9 4.500q2 2.500 0 5M11 3q3.500 4 0 8M13 1q5 6 0 12" fill="none" stroke="#ddd" />
                    </svg>
                </button>
                <div className="w-[56px] text-center text-[11px] leading-4">
                    <div>14.35</div>
                    <div className="whitespace-nowrap">28/03/2019</div>
                </div>
                <button aria-label="Notifications" className="ml-[16px] mr-[18px]">
                    <svg width="16" height="16" viewBox="0 0 16 16"><path d="M0.500 1.500h15v11H10.500L8 15l-2.500-2.500h-5z" fill="none" stroke="#fff" strokeWidth="1.200" /></svg>
                </button>
            </div>
        </div>
    );
}

function App() {
    return (
        <div className="relative flex h-screen flex-col overflow-hidden bg-linear-to-b from-white to-[#f0f1f3] to-[50px] font-['Open_Sans','Noto_Sans',sans-serif] text-[11px]">
            <Gradients />
            <TitleBar />
            <RibbonTabs />
            <Ribbon />
            <div className="flex min-h-0 flex-1 gap-1 bg-[#e3e6ec] pb-[1px] pt-[3px]">
                <PropertiesPanel />
                <LayoutEditor />
                <ObjectsPanel />
            </div>
            <StatusBar />
            <Taskbar />
            <Recorder />
        </div>
    );
}

export default App;
